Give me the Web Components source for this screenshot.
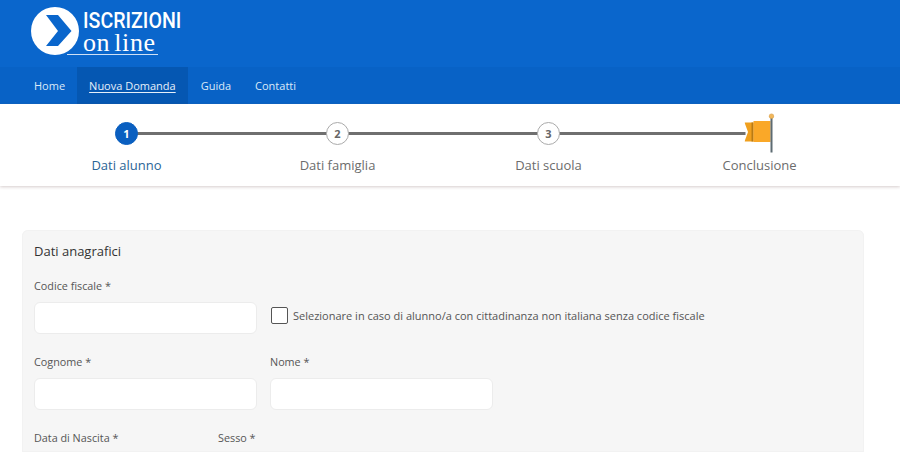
<!DOCTYPE html>
<html lang="it">
<head>
<meta charset="utf-8">
<title>Iscrizioni on line</title>
<style>
  html, body { margin: 0; height: 452px; overflow: hidden; background: #fff; }
  body { font-family: "Open Sans", "Liberation Sans", sans-serif; color: #444; }
</style>
</head>
<body>
<site-header></site-header>
<step-bar>
  <step-item num="1" state="active">Dati alunno</step-item>
  <step-item num="2">Dati famiglia</step-item>
  <step-item num="3">Dati scuola</step-item>
  <step-item flag>Conclusione</step-item>
</step-bar>
<form-panel heading="Dati anagrafici">
  <form-row>
    <text-field label="Codice fiscale *"></text-field>
    <check-field>Selezionare in caso di alunno/a con cittadinanza non italiana senza codice fiscale</check-field>
  </form-row>
  <form-row>
    <text-field label="Cognome *"></text-field>
    <text-field label="Nome *"></text-field>
  </form-row>
  <form-row tight>
    <text-field label="Data di Nascita *" narrow></text-field>
    <text-field label="Sesso *" narrow></text-field>
  </form-row>
</form-panel>

<script>
  // tiny helper, every element just sets its shadow html once
  function define(name, html, setup) {
    customElements.define(name, class extends HTMLElement {
      connectedCallback() {
        if (this.shadowRoot) return;
        const shadow = this.attachShadow({ mode: 'open' });
        shadow.innerHTML = typeof html === 'function' ? html(this) : html;
        if (setup) setup(this, shadow);
      }
    });
  }

  define('site-header', `
    <style>
      :host { display: block; background: #0a66cc; color: #fff; }
      .brand { height: 67px; display: flex; padding: 7px 0 0 31px; box-sizing: border-box; }
      svg { display: block; flex: none; }
      .words { width: 76px; flex: none; height: 48px; box-sizing: border-box; border-bottom: 1px solid #cfe0f5; padding-left: 1px; }
      .top { font: 500 22px/24px Roboto, sans-serif; white-space: nowrap; margin-top: 2px; height: 23px; transform: scaleX(.89); transform-origin: left; }
      .low { font: 26px/22px "Liberation Serif", serif; white-space: nowrap; letter-spacing: .6px; word-spacing: -3px; height: 22px; }
      nav { height: 37px; background: #0862c6; display: flex; padding-left: 22px; font-size: 11px; }
      a { color: #dce9f8; padding: 0 12px; line-height: 37px; text-decoration: none; }
      a.on { background: #0557b2; text-decoration: underline; text-underline-offset: 2px; color: #e6effa; margin: 0 1px 0 0; }
    </style>
    <div class="brand">
      <svg width="51" height="48" viewBox="0 0 51 48">
        <circle cx="24" cy="24" r="24" fill="#fff"/>
        <path d="M15 8H27L40.500 24 27 39H15L27 24Z" fill="#0a66cc"/>
        <path d="M36 47H51V48H36Z" fill="#cfe0f5"/>
      </svg>
      <div class="words"><div class="top">ISCRIZIONI</div><div class="low">on line</div></div>
    </div>
    <nav>
      <a>Home</a><a class="on">Nuova Domanda</a><a>Guida</a><a>Contatti</a>
    </nav>`);

  define('step-bar', `
    <style>
      :host { display: grid; grid-template-columns: repeat(4, 211px); padding: 0 0 0 21px; height: 82px; background: #fff;
        box-shadow: 0 1px 3px rgba(120,90,90,.3); position: relative; }
    </style>
    <slot></slot>`);

  define('step-item', el => {
    const active = el.getAttribute('state') === 'active';
    const mark = el.hasAttribute('flag')
      ? `<svg width="30" height="41" viewBox="0 0 30 41">
           <path d="M0 10.500H9V29.500H0L3.500 20Z" fill="#f0a01e"/>
           <rect x="7" y="10.500" width="2" height="19" fill="#b87a14"/>
           <path d="M9 9H26V30H9Z" fill="#faa828"/>
           <rect x="26" y="5" width="2" height="35.500" fill="#5d6b72"/>
           <circle cx="27" cy="4.200" r="2.300" fill="#f2b75a" stroke="#d9a04a" stroke-width=".6"/>
         </svg>`
      : `<b>${el.getAttribute('num')}</b>`;
    return `
    <style>
      :host { display: block; text-align: center; font-size: 13px; color: ${active ? '#2a6496' : '#6c6c6c'}; }
      .track { height: 42px; margin-top: 8px; display: flex; justify-content: center; align-items: center;
        background: linear-gradient(#6f6f6f, #6f6f6f) no-repeat ${active ? 'right' : el.hasAttribute('flag') ? 'left' : 'center'} 50% / ${active ? '50%' : '100%'} 3px; }
      :host([flag]) .track { background-size: calc(50% - 14px) 3px; }
      b { width: 23px; height: 23px; box-sizing: border-box; border-radius: 50%; font: 700 11px/21px "Open Sans", sans-serif; text-align: center;
        background: ${active ? '#0a5fc0' : '#fff'}; color: ${active ? '#fff' : '#666'}; border: 1px solid ${active ? '#0a5fc0' : '#aaa'}; }
      svg { display: block; transform: translate(-.5px, -1px); }
      .txt { line-height: 18px; margin-top: 2px; }
    </style>
    <div class="track">${mark}</div>
    <div class="txt"><slot></slot></div>`;
  });

  define('form-panel', el => `
    <style>
      :host { display: block; height: 222px; overflow: hidden; margin: 44px 36px 0 22px; background: #f6f6f6; border-radius: 6px 6px 0 0; padding: 11px 12px 0; box-sizing: border-box; box-shadow: inset 0 0 0 1px #f2f2f2; }
      h2 { margin: 0; font: 400 13px/20px "Open Sans", sans-serif; color: #333; }
      .rows { margin-top: 18px; display: flex; flex-direction: column; gap: 21px; }
    </style>
    <h2>${el.getAttribute('heading')}</h2>
    <div class="rows"><slot></slot></div>`);

  define('form-row', `
    <style>
      :host { display: flex; gap: 13px; align-items: flex-end; }
      :host([tight]) { gap: 0; }
    </style>
    <slot></slot>`);

  define('text-field', el => `
    <style>
      :host { display: block; width: ${el.hasAttribute('narrow') ? '184px' : '223px'}; flex: none; }
      label { display: block; font-size: 10.800px; line-height: 14px; color: #555; margin-bottom: 9px; }
      input { display: block; width: 100%; height: 32px; box-sizing: border-box; background: #fff; border: 1px solid #ececec; border-radius: 6px; }
    </style>
    <label>${el.getAttribute('label')}</label>
    ${el.hasAttribute('narrow') ? '' : '<input type="text">'}`);

  define('check-field', `
    <style>
      :host { display: flex; align-items: center; gap: 5px; height: 32px; margin-bottom: 3px; font-size: 11px; color: #555; white-space: nowrap; margin-left: 1px; }
      i { display: block; width: 17px; height: 17px; box-sizing: border-box; border: 1.500px solid #555; border-radius: 2px; background: #fff; flex: none; }
    </style>
    <i></i><slot></slot>`);
</script>
</body>
</html>
